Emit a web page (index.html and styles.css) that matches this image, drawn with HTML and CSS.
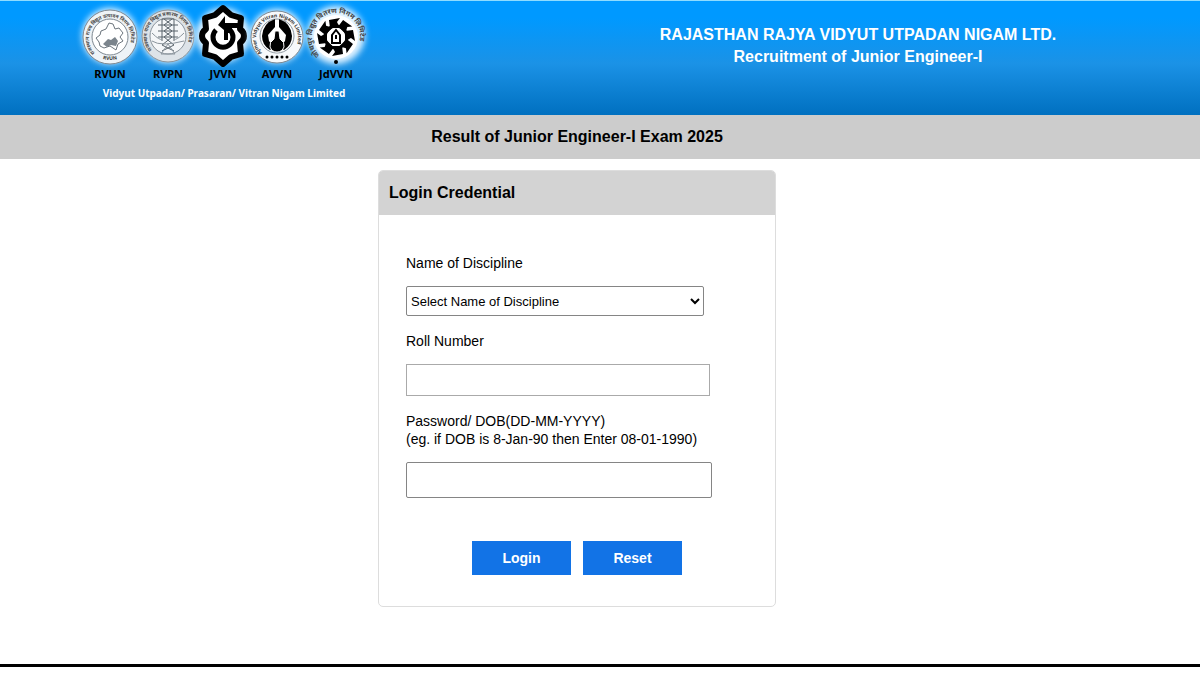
FILE: index.html
```
<!DOCTYPE html>
<html lang="en">
<head>
  <meta charset="UTF-8" />
  <meta name="viewport" content="width=device-width, initial-scale=1.0"/>
  <title>Result of Junior Engineer-I Exam 2025</title>
  <link rel="stylesheet" href="styles.css">
</head>
<body>
  <header class="banner">
    <div class="brand">
      <div class="emblems">
        <div class="emblem">
          <svg width="56" height="66" viewBox="0 0 56 66">
            <circle class="glow" cx="28" cy="35" r="28"/>
            <circle cx="28" cy="36" r="27" fill="#eef3f7" stroke="#7d8790"/>
            <circle cx="28" cy="36" r="18" fill="#fff" stroke="#7d8790"/>
            <path id="ringA" d="M13 52A21 21 0 1 1 43 52" fill="none"/>
            <path id="ringA2" d="M11 52A24 24 0 0 0 45 52" fill="none"/>
            <text class="hindi"><textPath href="#ringA">राजस्थान राज्य विद्युत उत्पादन निगम लिमिटेड</textPath></text>
            <text class="ring" text-anchor="middle"><textPath href="#ringA2" startOffset="50%">RVUN</textPath></text>
            <path d="M14 37l4-3 1-4 5-2 3-6 4 1 2 5 4-1 4 5-3 4 3 4-5 3-2 6-6-4-6 2-4-2-1-4z" fill="none" stroke="#6c757d"/>
            <path d="M21 43l5-5 3 1 4-3 3 4-2 5-5-1-4 2z" fill="#7b848c"/>
          </svg>
          <span>RVUN</span>
        </div>
        <div class="emblem">
          <svg width="56" height="66" viewBox="0 0 56 66">
            <circle class="glow" cx="28" cy="35" r="27"/>
            <circle cx="28" cy="35" r="26" fill="#dde3e8" stroke="#8a949c"/>
            <circle cx="28" cy="35" r="18" fill="#f4f6f8" stroke="#8a949c"/>
            <path id="ringB" d="M12 49A21 21 0 1 1 44 49" fill="none"/>
            <text class="hindi"><textPath href="#ringB">राजस्थान राज्य विद्युत प्रसारण निगम लिमिटेड</textPath></text>
            <path d="M22 18h12M18 24h20M18 30h20M18 36h20M24 18l8 6-8 6 8 6-10 8 12 6M32 18l-8 6 8 6-8 6 10 8-12 6M22 18v22M34 18v22" fill="none" stroke="#59636b"/>
            <path d="M12 32q8 8 10 6M44 32q-8 8-10 6M12 40q9 6 32 0M21 53l7-10 7 10z" fill="none" stroke="#8a949c"/>
          </svg>
          <span>RVPN</span>
        </div>
        <div class="emblem">
          <svg width="50" height="66" viewBox="0 0 50 66">
            <circle class="glow" cx="25" cy="34" r="27"/>
            <path d="M25 7L33 14L43 17L42 28Q46 31 46 35Q46 39 42 42L43 53L33 56L25 63L17 56L7 53L8 42Q4 39 4 35Q4 31 8 28L7 17L17 14Z" fill="#fff" stroke="#000" stroke-width="6" stroke-linejoin="round"/>
            <path d="M18 29A10 10 0 1 0 32 29" fill="none" stroke="#000" stroke-width="5"/>
            <path d="M27 15v7h16v5H34v5h-4v7h-4V29l-6-5z" fill="#000"/>
          </svg>
          <span>JVVN</span>
        </div>
        <div class="emblem">
          <svg width="54" height="66" viewBox="0 0 54 66">
            <circle class="glow" cx="27" cy="35" r="27"/>
            <circle cx="27" cy="36" r="26" fill="#f7f9fb" stroke="#7d8790"/>
            <circle cx="27" cy="35" r="17" fill="#fff" stroke="#8a949c"/>
            <path id="ringC" d="M12 52A21 21 0 1 1 42 52" fill="none"/>
            <text class="ring"><textPath href="#ringC">Ajmer Vidyut Vitran Nigam Limited</textPath></text>
            <path d="M25 18v8l-7 8 1 6 5 6-4 3q-8-5-8-14 1-13 13-17zM29 18v8l7 8-1 6-5 6 4 3q8-5 8-14-1-13-13-17z" fill="#000"/>
            <path d="M25 30h4l1 8q5 3 4 8-2 5-7 5t-7-5q-1-5 4-8z" fill="#000" stroke="#fff"/>
            <path d="M17 56h21" stroke="#000" stroke-width="3" stroke-linecap="round" stroke-dasharray="0 5"/>
          </svg>
          <span>AVVN</span>
        </div>
        <div class="emblem">
          <svg width="60" height="66" viewBox="0 0 60 66">
            <circle class="glow" cx="30" cy="34" r="29"/>
            <circle cx="30" cy="36" r="22" fill="#fff"/>
            <path id="ringD" d="M14 54A24 24 0 1 1 46 54" fill="none"/>
            <text class="hindi hindi-big"><textPath href="#ringD">जोधपुर विद्युत वितरण निगम लिमिटेड</textPath></text>
            <circle cx="30" cy="36" r="11" fill="#fff" stroke="#000" stroke-width="3"/>
            <path id="tooth" d="M24 27l-1-8 11-2-3 4 3 6z"/>
            <use href="#tooth" transform="rotate(45 30 36)"/>
            <use href="#tooth" transform="rotate(90 30 36)"/>
            <use href="#tooth" transform="rotate(135 30 36)"/>
            <use href="#tooth" transform="rotate(180 30 36)"/>
            <use href="#tooth" transform="rotate(225 30 36)"/>
            <use href="#tooth" transform="rotate(270 30 36)"/>
            <use href="#tooth" transform="rotate(315 30 36)"/>
            <path d="M26 42v-8l4-5 4 5v8zM30 34v4" fill="none" stroke="#000" stroke-width="2"/>
            <circle cx="30" cy="61" r="2"/>
          </svg>
          <span>JdVVN</span>
        </div>
      </div>
      <p class="tagline">Vidyut Utpadan/ Prasaran/ Vitran Nigam Limited</p>
    </div>
    <h1 class="org">RAJASTHAN RAJYA VIDYUT UTPADAN NIGAM LTD.<br>Recruitment of Junior Engineer-I</h1>
  </header>

  <h2 class="page-title">Result of Junior Engineer-I Exam 2025</h2>

  <main class="content">
    <form class="panel">
      <h3 class="panel-heading">Login Credential</h3>
      <div class="panel-body">
        <div class="field">
          <label for="discipline">Name of Discipline</label>
          <select id="discipline" class="control discipline">
            <option>Select Name of Discipline</option>
          </select>
        </div>
        <div class="field">
          <label for="roll">Roll Number</label>
          <input type="text" id="roll" class="control roll">
        </div>
        <div class="field">
          <label for="dob">Password/ DOB(DD-MM-YYYY)<br>(eg. if DOB is 8-Jan-90 then Enter 08-01-1990)</label>
          <input type="password" id="dob" class="control dob">
        </div>
      </div>
      <div class="actions">
        <button type="submit" class="btn">Login</button>
        <button type="reset" class="btn">Reset</button>
      </div>
    </form>
  </main>

  <hr class="footer-line">
</body>
</html>
```
FILE: styles.css
```
* { box-sizing: border-box; }

body {
  margin: 0;
  font-family: Arial, "Liberation Sans", sans-serif;
  font-size: 14px;
  line-height: 18px;
  color: #000;
  background: #fff;
}

h1, h2, h3, p { margin: 0; }

/* Banner */
.banner {
  display: grid;
  grid-template-columns: 43% 57%;
  min-height: 115px;
  border-top: 1px solid #8fdcff;
  background: linear-gradient(#0099ff 15%, #1b92e6 55%, #0070c0);
}

.brand {
  justify-self: start;
  margin-left: 82px;
  font-family: "Noto Sans", "Open Sans", sans-serif;
  font-weight: bold;
  font-size: 11px;
  text-align: center;
}

.emblems {
  display: flex;
  gap: 2px;
}

.emblem {
  display: flex;
  flex-direction: column;
  align-items: center;
  line-height: 14px;
}

.emblem svg { overflow: visible; }

.glow {
  fill: #e2f3ff;
  filter: blur(3px);
}

.ring {
  font-size: 5px;
  fill: #333;
}

.hindi {
  font-size: 5px;
  fill: #444;
}

.hindi-big { font-size: 7px; }

.tagline {
  margin-top: 3px;
  font-size: 10px;
  color: #fff;
}

.org {
  padding-top: 23px;
  font-size: 16px;
  line-height: 22px;
  color: #fff;
  text-align: center;
}

.page-title {
  padding: 11px 46px 11px 0;
  font-size: 16px;
  line-height: 22px;
  text-align: center;
  background: #ccc;
}

/* Login panel */
.content { padding: 11px 46px 57px 0; }

.panel {
  max-width: 398px;
  margin: 0 auto;
  border: 1px solid #ddd;
  border-radius: 5px;
}

.panel-heading {
  padding: 11px 10px;
  font-size: 16px;
  line-height: 22px;
  background: #d3d3d3;
  border-radius: 4px 4px 0 0;
}

.panel-body {
  display: flex;
  flex-direction: column;
  gap: 16px;
  padding: 39px 64px 0 27px;
}

.field {
  display: flex;
  flex-direction: column;
  gap: 14px;
}

.control {
  height: 30px;
  font: inherit;
  color: #000;
  background: #fff;
  border: 1px solid #858585;
  border-radius: 2px;
}

.discipline {
  width: 298px;
  font-size: 13px;
}

.roll {
  width: 304px;
  height: 32px;
  border-color: #aaa;
  border-radius: 0;
}

.dob {
  width: 306px;
  height: 36px;
}

.actions {
  display: flex;
  justify-content: center;
  gap: 12px;
  padding: 43px 0 31px;
}

.btn {
  width: 99px;
  height: 34px;
  border: none;
  background: #1273e6;
  color: #fff;
  font: bold 14px Arial, "Liberation Sans", sans-serif;
  cursor: pointer;
}

.btn:hover { background: #0d5fc2; }

.footer-line {
  margin: 0;
  border: none;
  border-top: 3px solid #000;
}
```
